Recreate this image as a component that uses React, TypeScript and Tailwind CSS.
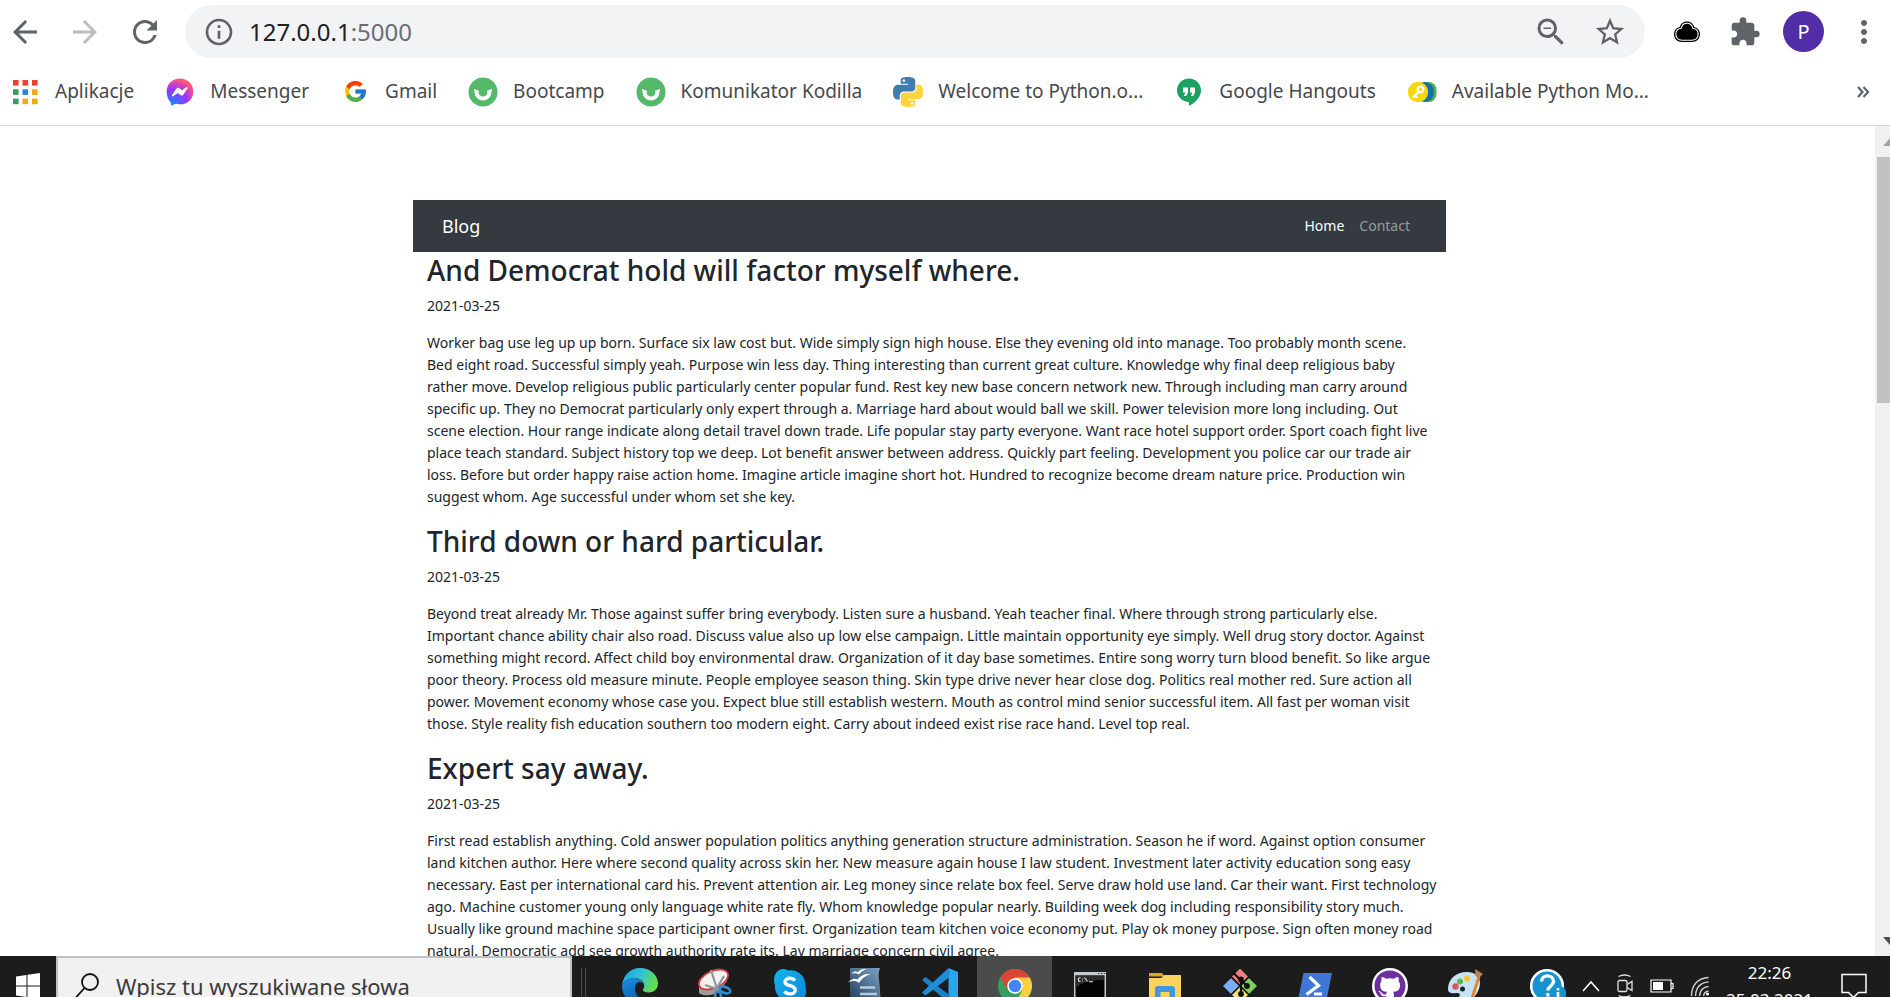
import type { ReactNode } from "react";
import { FcGoogle } from "react-icons/fc";
import { FaGithub } from "react-icons/fa";
import {
  MdArrowBack,
  MdArrowForward,
  MdExtension,
  MdMoreVert,
  MdOutlineInfo,
  MdRefresh,
  MdStarBorder,
  MdZoomOut,
} from "react-icons/md";

type Post = { title: string; date: string; body: string };

const posts: Post[] = [
  {
    title: "And Democrat hold will factor myself where.",
    date: "2021-03-25",
    body: `Worker bag use leg up up born. Surface six law cost but. Wide simply sign high house. Else they evening old into manage. Too probably month scene.
Bed eight road. Successful simply yeah. Purpose win less day. Thing interesting than current great culture. Knowledge why final deep religious baby
rather move. Develop religious public particularly center popular fund. Rest key new base concern network new. Through including man carry around
specific up. They no Democrat particularly only expert through a. Marriage hard about would ball we skill. Power television more long including. Out
scene election. Hour range indicate along detail travel down trade. Life popular stay party everyone. Want race hotel support order. Sport coach fight live
place teach standard. Subject history top we deep. Lot benefit answer between address. Quickly part feeling. Development you police car our trade air
loss. Before but order happy raise action home. Imagine article imagine short hot. Hundred to recognize become dream nature price. Production win
suggest whom. Age successful under whom set she key.`,
  },
  {
    title: "Third down or hard particular.",
    date: "2021-03-25",
    body: `Beyond treat already Mr. Those against suffer bring everybody. Listen sure a husband. Yeah teacher final. Where through strong particularly else.
Important chance ability chair also road. Discuss value also up low else campaign. Little maintain opportunity eye simply. Well drug story doctor. Against
something might record. Affect child boy environmental draw. Organization of it day base sometimes. Entire song worry turn blood benefit. So like argue
poor theory. Process old measure minute. People employee season thing. Skin type drive never hear close dog. Politics real mother red. Sure action all
power. Movement economy whose case you. Expect blue still establish western. Mouth as control mind senior successful item. All fast per woman visit
those. Style reality fish education southern too modern eight. Carry about indeed exist rise race hand. Level top real.`,
  },
  {
    title: "Expert say away.",
    date: "2021-03-25",
    body: `First read establish anything. Cold answer population politics anything generation structure administration. Season he if word. Against option consumer
land kitchen author. Here where second quality across skin her. New measure again house I law student. Investment later activity education song easy
necessary. East per international card his. Prevent attention air. Leg money since relate box feel. Serve draw hold use land. Car their want. First technology
ago. Machine customer young only language white rate fly. Whom knowledge popular nearly. Building week dog including responsibility story much.
Usually like ground machine space participant owner first. Organization team kitchen voice economy put. Play ok money purpose. Sign often money road
natural. Democratic add see growth authority rate its. Lay marriage concern civil agree.`,
  },
];

/* ---------- bookmark icons ---------- */

function AppsIcon() {
  const colors = ["#ea4335", "#ff3b30", "#ea4335", "#34a060", "#1e88e5", "#f4a915", "#34a060", "#f4a915", "#f4a915"];
  return (
    <svg viewBox="0 0 30 30" className="size-[30px]" aria-hidden="true">
      {colors.map((c, i) => (
        <rect key={i} x={3 + (i % 3) * 9.5} y={3 + Math.floor(i / 3) * 9.3} width="5.6" height="5.6" fill={c} />
      ))}
    </svg>
  );
}

function MessengerIcon() {
  return (
    <svg viewBox="0 0 30 30" className="size-[30px]" aria-hidden="true">
      <defs>
        <radialGradient id="msg" cx="0.2" cy="1" r="1.1">
          <stop offset="0" stopColor="#0a8cff" />
          <stop offset="0.55" stopColor="#9a33ff" />
          <stop offset="0.9" stopColor="#ff5280" />
          <stop offset="1" stopColor="#ff7061" />
        </radialGradient>
      </defs>
      <path d="M15 1.5c7.600 0 13.300 5.500 13.300 12.900S22.600 27.300 15 27.300c-1.400 0-2.700-.2-3.900-.5L6 28.500l-.2-3.100C3.200 23 1.700 18.900 1.700 14.400 1.700 7 7.400 1.500 15 1.500z" fill="url(#msg)" />
      <path d="M7 18.300l4.400-6.700c.6-.9 1.800-1.100 2.700-.5l2.800 2.100 4.600-3c.7-.4 1.500.3 1.100 1l-4.300 6.500c-.6.9-1.800 1.100-2.700.5l-2.800-2.100-4.700 3.200c-.7.4-1.500-.3-1.100-1z" fill="#fff" />
    </svg>
  );
}

function KodillaIcon() {
  return (
    <svg viewBox="0 0 30 30" className="size-[30px]" aria-hidden="true">
      <circle cx="15" cy="15" r="14.500" fill="#55b96a" />
      <path d="M8.300 13.500c0 5 2.800 8 6.700 8s6.700-3 6.700-8" fill="none" stroke="#fff" strokeWidth="4" />
      <path d="M6 12.800l5 1.800M24 12.800l-5 1.800" stroke="#fff" strokeWidth="1.500" />
    </svg>
  );
}

function PythonIcon() {
  return (
    <svg viewBox="0 0 24 24" className="size-[30px]" aria-hidden="true">
      <path
        fill="#3f7cb0"
        d="M14.25.18l.9.2.73.26.59.3.45.32.34.34.25.34.16.33.1.3.04.26.02.2-.01.13V8.5l-.05.63-.13.55-.21.46-.26.38-.3.31-.33.25-.35.19-.35.14-.33.1-.3.07-.26.04-.21.02H8.77l-.69.05-.59.14-.5.22-.41.27-.33.32-.27.35-.2.36-.15.37-.1.35-.07.32-.04.27-.02.21v3.06H3.17l-.21-.03-.28-.07-.32-.12-.35-.18-.36-.26-.36-.36-.35-.46-.32-.59-.28-.73-.21-.88-.14-1.05-.05-1.23.06-1.22.16-1.04.24-.87.32-.71.36-.57.4-.44.42-.33.42-.24.4-.16.36-.1.32-.05.24-.01h.16l.06.01h8.16v-.83H6.18l-.01-2.75-.02-.37.05-.34.11-.31.17-.28.25-.26.31-.23.38-.2.44-.18.51-.15.58-.12.64-.1.71-.06.77-.04.84-.02 1.27.05zm-6.3 1.98l-.23.33-.08.41.08.41.23.34.33.22.41.09.41-.09.33-.22.23-.34.08-.41-.08-.41-.23-.33-.33-.22-.41-.09-.41.09z"
      />
      <path
        fill="#fcd340"
        d="M21.1 6.11l.28.06.32.12.35.18.36.27.36.35.35.47.32.59.28.73.21.88.14 1.04.05 1.23-.06 1.23-.16 1.04-.24.86-.32.71-.36.57-.4.45-.42.33-.42.24-.4.16-.36.09-.32.05-.24.02-.16-.01h-8.22v.82h5.84l.01 2.76.02.36-.05.34-.11.31-.17.29-.25.25-.31.24-.38.2-.44.17-.51.15-.58.13-.64.09-.71.07-.77.04-.84.01-1.27-.04-1.07-.14-.9-.2-.73-.25-.59-.3-.45-.33-.34-.34-.25-.34-.16-.33-.1-.3-.04-.25-.02-.2.01-.13v-5.34l.05-.64.13-.54.21-.46.26-.38.3-.32.33-.24.35-.2.35-.14.33-.1.3-.06.26-.04.21-.02.13-.01h5.84l.69-.05.59-.14.5-.21.41-.28.33-.32.27-.35.2-.36.15-.36.1-.35.07-.32.04-.28.02-.21V6.07h2.09l.14.01zm-6.47 14.25l-.23.33-.08.41.08.41.23.33.33.23.41.08.41-.08.33-.23.23-.33.08-.41-.08-.41-.23-.33-.33-.23-.41-.08-.41.08z"
      />
    </svg>
  );
}

function HangoutsIcon() {
  return (
    <svg viewBox="0 0 30 30" className="size-[30px]" aria-hidden="true">
      <path d="M15 1.500C8.300 1.500 3 6.700 3 13.300S8.300 25 15 25v4c5.500-2.700 12-8.300 12-15.700C27 6.700 21.700 1.500 15 1.500z" fill="#1ba261" />
      <path d="M9 10.500h5v5l-1.800 3.500h-2.400l1.600-3.500H9zM16 10.500h5v5l-1.800 3.500h-2.400l1.600-3.500H16z" fill="#fff" />
    </svg>
  );
}

function KeyIcon() {
  return (
    <svg viewBox="0 0 30 30" className="size-[30px]" aria-hidden="true">
      <rect x="12" y="5" width="17.500" height="20" rx="8" fill="#4caf50" />
      <rect x="8" y="5" width="19" height="20" rx="9.500" fill="#1470b0" />
      <circle cx="11" cy="15" r="10.200" fill="#f6d90a" />
      <g fill="none" stroke="#fff" strokeWidth="2.200" strokeLinecap="round">
        <circle cx="13.500" cy="12.500" r="2.800" />
        <path d="M11.500 14.800L6.500 20M8 18.500l1.600 1.500" />
      </g>
    </svg>
  );
}

const bookmarks: { label: string; icon: ReactNode }[] = [
  { label: "Aplikacje", icon: <AppsIcon /> },
  { label: "Messenger", icon: <MessengerIcon /> },
  { label: "Gmail", icon: <FcGoogle className="size-[25px]" aria-hidden="true" /> },
  { label: "Bootcamp", icon: <KodillaIcon /> },
  { label: "Komunikator Kodilla", icon: <KodillaIcon /> },
  { label: "Welcome to Python.o...", icon: <PythonIcon /> },
  { label: "Google Hangouts", icon: <HangoutsIcon /> },
  { label: "Available Python Mo...", icon: <KeyIcon /> },
];

/* ---------- taskbar icons ---------- */

function TaskSvg({ children }: { children: ReactNode }) {
  return (
    <svg viewBox="0 0 36 36" className="size-9" aria-hidden="true">
      {children}
    </svg>
  );
}

const taskbarApps: { name: string; active?: boolean; icon: ReactNode }[] = [
  {
    name: "Edge",
    icon: (
      <TaskSvg>
        <defs>
          <linearGradient id="edgeTop" x1="0" x2="1" y1="0" y2="0.3">
            <stop offset="0" stopColor="#1f9fe0" />
            <stop offset="0.55" stopColor="#2fc3d8" />
            <stop offset="1" stopColor="#62dc50" />
          </linearGradient>
          <linearGradient id="edgeLow" x1="0" x2="0.6" y1="0" y2="1">
            <stop offset="0" stopColor="#1a8fe0" />
            <stop offset="1" stopColor="#0c59a4" />
          </linearGradient>
        </defs>
        <path d="M0 18C1 7 8.500 0 18 0c10.500 0 18 7.500 18 15.500C36 21 32 24.500 27 24.500c-4 0-6.200-1.300-6.200-2.500 0-.8 1.500-1.700 1.500-4.200 0-4-4-7.800-9.800-7.800C6 10 1.500 13 0 18z" fill="url(#edgeTop)" />
        <path d="M0 18C1.500 12.500 6.500 9.500 12.500 10c5 .4 8.500 3 9.300 6.200-1.400-1.900-3.200-2.500-4.800-2.200-3 .6-4.500 4-4 8 .7 5.500 6 10.500 13 10.500 2 0 4-.5 6-1.500-3.500 4-8.500 5-14 5C8 36 0 28.500 0 18z" fill="url(#edgeLow)" />
      </TaskSvg>
    ),
  },
  {
    name: "Snipping tool",
    icon: (
      <TaskSvg>
        <path d="M2 18v7c4 4 16 3 21-3l7-9V9z" fill="#9b9b9b" />
        <ellipse cx="16.500" cy="11.500" rx="15.500" ry="8.500" transform="rotate(-24 16.500 11.500)" fill="#f5f1f1" stroke="#d33b3b" strokeWidth="1.800" />
        <path d="M14 2l6 19M8 17l12 4M27 8l-9 15" stroke="#8b979f" strokeWidth="2.200" />
        <g fill="none" stroke="#2f8fd0" strokeWidth="2.600">
          <ellipse cx="28" cy="22" rx="5.500" ry="3" transform="rotate(20 28 22)" />
          <ellipse cx="21" cy="29" rx="3" ry="5.500" />
        </g>
      </TaskSvg>
    ),
  },
  {
    name: "Skype",
    icon: (
      <TaskSvg>
        <defs>
          <linearGradient id="sky" x1="0" x2="1" y1="0" y2="1">
            <stop offset="0" stopColor="#14b5ec" />
            <stop offset="1" stopColor="#0b86dc" />
          </linearGradient>
        </defs>
        <path d="M11 1c2 0 3.700.6 5 1.400C26 1 34.500 8.500 33.300 19c2.800 5.500-.6 14-7.300 15-2.300.3-4.200-.3-5.500-1.200C10.500 34.500 2 27 3 17 .5 11 3 1.500 11 1z" fill="url(#sky)" />
        <path d="M23 12.500c-1.200-1.500-3-2.200-5-2.200-3 0-5 1.500-5 3.600 0 4.800 10.300 2.700 10.300 8 0 2.500-2.300 4-5.300 4-2.300 0-4.300-.9-5.500-2.600" fill="none" stroke="#fff" strokeWidth="3.400" />
      </TaskSvg>
    ),
  },
  {
    name: "Writer",
    icon: (
      <TaskSvg>
        <defs>
          <linearGradient id="wr" x1="0" x2="1" y1="1" y2="0">
            <stop offset="0" stopColor="#1c3a5c" />
            <stop offset="1" stopColor="#7fa3c4" />
          </linearGradient>
        </defs>
        <path d="M3 0h30c-3 8 0 14 0 22s2 10 1 14H3z" fill="url(#wr)" />
        <path d="M13 19.500h15M13 26h17" stroke="#b9cbdc" strokeWidth="2.500" />
        <path d="M1 14.500c4-4 7-4.500 9.500-3 3-4 7-6 13.500-5.500-5 1.500-9 4-12 9-3-2.500-6-2.500-11-.5zM4 5.500c3-2.500 5-2.500 7-1.500C13 1.500 16 .5 20 1c-4 1-6 3-8 5.500C10 5 8 5 4 5.500z" fill="#fff" />
      </TaskSvg>
    ),
  },
  {
    name: "VS Code",
    icon: (
      <TaskSvg>
        <path d="M26.500 0L36 4v28l-9.500 4z" fill="#2aa5ee" />
        <path d="M0 12l3.500-3L28 27.500V36z" fill="#1b82c8" />
        <path d="M0 24.500L26.500 0 27 9.500 3.500 27.500z" fill="#1c8fd8" />
      </TaskSvg>
    ),
  },
  {
    name: "Chrome",
    active: true,
    icon: (
      <TaskSvg>
        <circle cx="18" cy="18" r="17" fill="#34a060" />
        <path d="M3.300 9.500A17 17 0 0 1 32.700 9.500H18l-7.400 12.700z" fill="#db4437" />
        <path d="M32.700 9.500A17 17 0 0 1 18 35l7.400-12.700L18 9.500z" fill="#ffcd40" />
        <circle cx="18" cy="18" r="7.800" fill="#fff" />
        <circle cx="18" cy="18" r="6.200" fill="#4285f4" />
      </TaskSvg>
    ),
  },
  {
    name: "Command prompt",
    icon: (
      <TaskSvg>
        <rect x="2" y="4" width="32" height="30" fill="#c3cbd0" />
        <rect x="3.500" y="7.500" width="29" height="25" fill="#050505" />
        <path d="M3.500 20C10 14 20 12 32 12V7.500H3.500z" fill="#2b2b2b" />
        <path d="M26 5.500h1.500M29 5.500h1.500M32 5.500h1" stroke="#333" strokeWidth="1.200" />
        <path d="M8.500 9.800c-2.800-.8-2.800 4.400 0 3.600M10.500 10.500v.8M10.500 12.500v.8M12.500 9.500l3 4M17 13.700h4" fill="none" stroke="#e8e8e8" strokeWidth="1.100" />
      </TaskSvg>
    ),
  },
  {
    name: "File explorer",
    icon: (
      <TaskSvg>
        <path d="M2 5h13l3 3.500h-16z" fill="#e0a41b" />
        <path d="M2 10h12l3.500-3H34v27H2z" fill="#fbd35c" />
        <path d="M8 34V21a3 3 0 0 1 3-3h14a3 3 0 0 1 3 3v13h-5.500V24h-9v10z" fill="#3f97dd" />
      </TaskSvg>
    ),
  },
  {
    name: "Git",
    icon: (
      <TaskSvg>
        <g stroke="#1a1a1a" strokeWidth="1.500">
          <path d="M18-.5L27 8.500 18 17.500 9 8.500z" fill="#f47c7c" />
          <path d="M9 9l9 9-9 9-9-9z" fill="#7aaef5" />
          <path d="M27 9l9 9-9 9-9-9z" fill="#7ed05a" />
          <path d="M18 18l9 9-9 9-9-9z" fill="#fbdf6b" />
        </g>
        <path d="M11 4.500l8 8v14M19 12.500l6 5.500" fill="none" stroke="#111" strokeWidth="2.200" />
        <circle cx="19" cy="11.500" r="2.900" fill="#111" />
        <circle cx="25" cy="18" r="2.900" fill="#111" />
        <circle cx="19" cy="26" r="2.900" fill="#111" />
      </TaskSvg>
    ),
  },
  {
    name: "PowerShell",
    icon: (
      <TaskSvg>
        <path d="M6.500 5H35l-5.500 27H1z" fill="#3f77d6" />
        <path d="M12.500 9l9 8.500-12 9" fill="none" stroke="#fff" strokeWidth="3.200" />
        <path d="M17 26h8" stroke="#fff" strokeWidth="3" />
      </TaskSvg>
    ),
  },
  {
    name: "GitHub Desktop",
    icon: (
      <span className="grid size-9 place-items-center rounded-full bg-white">
        <FaGithub className="size-8 text-[#6e2f9e]" aria-hidden="true" />
      </span>
    ),
  },
  {
    name: "Paint",
    icon: (
      <TaskSvg>
        <path d="M1 21C1 11 9 4 20 4c8 0 13 4.500 13 11 0 9-8 20-18 20-4 0-5-3-3-6s0-4.500-3-4c-4 1-8 0-8-4z" fill="#c4e3f3" />
        <circle cx="8.500" cy="18.500" r="3.200" fill="#e2525a" />
        <circle cx="13" cy="13.500" r="3" fill="#59b94b" />
        <circle cx="20" cy="10.500" r="3" fill="#f2c530" />
        <circle cx="15.500" cy="21" r="2.500" fill="#10222e" />
        <path d="M31 7l2.500 1.500-8 25-3.500 1.500z" fill="#e2832b" />
        <path d="M28 1l8 5-4.500 4-3-2z" fill="#b98454" />
      </TaskSvg>
    ),
  },
];

function HelpIcon() {
  return (
    <TaskSvg>
      <circle cx="17" cy="18" r="15.800" fill="#1593d0" stroke="#fff" strokeWidth="2.600" />
      <path d="M11.500 13.500c0-7.500 12-7.500 12 0 0 4.500-5.500 4.500-5.500 9M18 25v3.500" fill="none" stroke="#fff" strokeWidth="3.400" />
      <circle cx="28" cy="26" r="8.500" fill="#1593d0" />
      <path d="M28 20v2.500M28 24v8" stroke="#fff" strokeWidth="2.600" />
    </TaskSvg>
  );
}

/* ---------- sections ---------- */

function BrowserChrome() {
  return (
    <header className="shrink-0 border-b border-[#d5d7da] bg-white">
      <div className="flex items-center gap-[22px] pt-[5px] pr-2 pl-[7px] text-[#5f6368]">
        <nav aria-label="History" className="flex gap-6">
          <button aria-label="Back"><MdArrowBack className="size-9" /></button>
          <button aria-label="Forward" disabled className="text-[#bcbec1]"><MdArrowForward className="size-9" /></button>
          <button aria-label="Reload"><MdRefresh className="size-9" /></button>
        </nav>
        <div className="flex h-[53px] min-w-0 flex-1 items-center rounded-full bg-[#f1f3f4] px-[18px]">
          <MdOutlineInfo className="size-8 shrink-0" />
          <a href="http://127.0.0.1:5000" className="ml-[14px] flex-1 text-[24px] leading-8 text-[#202124]">
            127.0.0.1<span className="text-[#6a6e73]">:5000</span>
          </a>
          <button aria-label="Zoom out" className="mr-6"><MdZoomOut className="size-9" /></button>
          <button aria-label="Bookmark this page"><MdStarBorder className="size-[34px]" /></button>
        </div>
        <button aria-label="Cloud extension" className="grid w-10 place-items-center">
          <svg viewBox="0 0 28 24" className="h-6 w-7" aria-hidden="true">
            <path d="M14 1.500c4 0 6.500 2.500 7.300 5.500 3.500.8 5.700 3.500 5.700 7 0 5-3.500 8-8 8H9c-4.500 0-8-3-8-8 0-3.500 2.200-6.200 5.700-7C7.500 4 10 1.500 14 1.500z" fill="#000" />
            <path d="M14 3.200c3.300 0 5.200 2.200 5.800 5 3.300.5 5.400 2.700 5.400 5.800 0 3.800-2.700 6.200-6.200 6.200H9c-3.500 0-6.200-2.400-6.200-6.200 0-3.100 2.100-5.300 5.400-5.800.6-2.800 2.500-5 5.800-5z" fill="none" stroke="#fff" strokeWidth="1.100" />
          </svg>
        </button>
        <button aria-label="Extensions"><MdExtension className="size-8" /></button>
        <button className="size-[41px] rounded-full bg-[#512da8] text-[20px] text-white">P</button>
        <button aria-label="Menu"><MdMoreVert className="size-9" /></button>
      </div>
      <div className="flex h-[67px] items-center pr-5 pl-[10px] text-[19px] text-[#46494d]">
        <nav aria-label="Bookmarks" className="flex flex-1 gap-[31px] whitespace-nowrap">
          {bookmarks.map((b) => (
            <a key={b.label} href="#" className="flex items-center gap-[15px]">
              <span className="grid size-[30px] place-items-center">{b.icon}</span>
              {b.label}
            </a>
          ))}
        </nav>
        <button aria-label="More bookmarks">
          <svg viewBox="0 0 14 14" className="size-[14px]" aria-hidden="true">
            <path d="M2 2l4.500 5L2 12M7.500 2l4.500 5-4.500 5" fill="none" stroke="#5f6368" strokeWidth="2.200" />
          </svg>
        </button>
      </div>
    </header>
  );
}

function BlogPage() {
  return (
    <main className="flex-1 overflow-hidden pt-[74px] pr-4">
      <div className="mx-auto max-w-[1033px] text-[14px] leading-[22px] text-[#212529]">
        <nav className="flex h-[52px] items-center bg-[#343a40] pr-9 pl-[29px]">
          <a href="#" className="flex-1 text-[18px] text-white">Blog</a>
          <a href="#" className="mr-[15px] text-white">Home</a>
          <a href="#" className="text-[#999c9f]">Contact</a>
        </nav>
        {posts.map((post) => (
          <article key={post.title} className="px-[14px] whitespace-pre">
            <h2 className="mb-[7px] text-[28px] leading-9 font-medium">{post.title}</h2>
            <p className="mb-[15px]">{post.date}</p>
            <p className="mb-[15px]">{post.body}</p>
          </article>
        ))}
      </div>
    </main>
  );
}

function ScrollTrack() {
  return (
    <div className="flex w-[15px] shrink-0 flex-col overflow-hidden bg-[#f1f1f1] pl-[2px]" aria-hidden="true">
      <svg viewBox="0 0 13 31" className="h-[31px] w-[13px] shrink-0">
        <path d="M6 20l7-8v8z" fill="#a3a3a3" />
      </svg>
      <div className="h-[246px] shrink-0 bg-[#c1c1c1]" />
      <svg viewBox="0 0 13 31" className="mt-auto h-[31px] w-[13px] shrink-0">
        <path d="M6 12h7v8z" fill="#505050" />
      </svg>
    </div>
  );
}

function Taskbar() {
  return (
    <footer className="h-[41px] shrink-0 overflow-hidden bg-[#1c1c1c] text-white">
      <div className="flex h-[60px]">
        <button aria-label="Start" className="grid w-14 place-items-center">
          <svg viewBox="0 0 26 28" className="h-7 w-[26px]" aria-hidden="true">
            <path d="M1 4.500l10.500-1.500v10.500H1zM12.500 2.800L25 1v12.500H12.500zM1 14.500h10.500v10.500L1 23.500zM12.500 14.500H25V27l-12.500-1.800z" fill="#fff" />
          </svg>
        </button>
        <label className="flex w-[516px] items-center border-2 border-[#c2c2c2] bg-[#f1f1f1] pl-4">
          <svg viewBox="0 0 26 28" className="h-7 w-[26px] shrink-0" aria-hidden="true">
            <circle cx="16" cy="10" r="8" fill="none" stroke="#111" strokeWidth="1.800" />
            <path d="M10.500 16L1 26.500" stroke="#111" strokeWidth="1.800" />
          </svg>
          <input
            aria-label="Wpisz tu wyszukiwane słowa"
            placeholder="Wpisz tu wyszukiwane słowa"
            className="ml-4 min-w-0 flex-1 bg-transparent text-[22px] leading-8 outline-none placeholder:text-[#3a3a3a]"
          />
        </label>
        <div className="flex w-[30px] gap-[3px] pt-3 pl-[9px]" aria-hidden="true">
          <span className="w-px bg-[#4a4a4a]" />
          <span className="w-px bg-[#4a4a4a]" />
        </div>
        {taskbarApps.map((app) => (
          <button
            key={app.name}
            aria-label={app.name}
            className={app.active ? "grid w-[75px] place-items-center bg-[#4b4b4b]" : "grid w-[75px] place-items-center"}
          >
            {app.icon}
          </button>
        ))}
        <div className="ml-auto flex items-center gap-4 pr-[23px]">
          <button aria-label="Help"><HelpIcon /></button>
          <button aria-label="Show hidden icons">
            <svg viewBox="0 0 18 12" className="h-3 w-[18px]" aria-hidden="true">
              <path d="M1 11l8-9 8 9" fill="none" stroke="#fff" strokeWidth="1.500" />
            </svg>
          </button>
          <svg viewBox="0 0 18 24" className="h-6 w-[18px]" role="img" aria-label="Meet now" fill="none" stroke="#e4e4e4" strokeWidth="1.300">
            <rect x="2" y="6.500" width="9" height="11" rx="1.500" />
            <path d="M11 10.500l5-3v9l-5-3M2.500 2.500q6-3 12 0M2.500 21.500q6 3 12 0" />
          </svg>
          <svg viewBox="0 0 24 14" className="h-[14px] w-6" role="img" aria-label="Battery">
            <path d="M1 1h20v12H1zM21 4.500h2v5h-2" fill="none" stroke="#fff" strokeWidth="1.200" />
            <path d="M3 3h10v8H3z" fill="#fff" />
          </svg>
          <svg viewBox="0 0 20 20" className="size-5" role="img" aria-label="Wi-Fi" fill="none" stroke="#d0d0d0" strokeWidth="1.400">
            <path d="M1.500 20C1.500 9 8 2 18.500 1.500M5.500 20C6 11.500 10.500 6.500 18.500 6M9.500 20c.5-5.500 4-9 9-9.500M13.500 20c.3-2.500 2-4.500 5-5" />
            <circle cx="17.500" cy="18" r="1.500" fill="#fff" stroke="none" />
          </svg>
          <button className="mr-3 text-center text-[17px] leading-[27px]">
            22:26
            <br />
            25.03.2021
          </button>
          <button aria-label="Notifications">
            <svg viewBox="0 0 26 26" className="size-[26px]" aria-hidden="true">
              <path d="M1 1.500h24v18h-7.500l-5 5-5-5H1z" fill="none" stroke="#fff" strokeWidth="1.500" />
            </svg>
          </button>
        </div>
      </div>
    </footer>
  );
}

export default function App() {
  return (
    <div className="flex h-screen flex-col overflow-hidden bg-white font-['Noto_Sans',sans-serif]">
      <BrowserChrome />
      <div className="flex min-h-0 flex-1">
        <BlogPage />
        <ScrollTrack />
      </div>
      <Taskbar />
    </div>
  );
}
